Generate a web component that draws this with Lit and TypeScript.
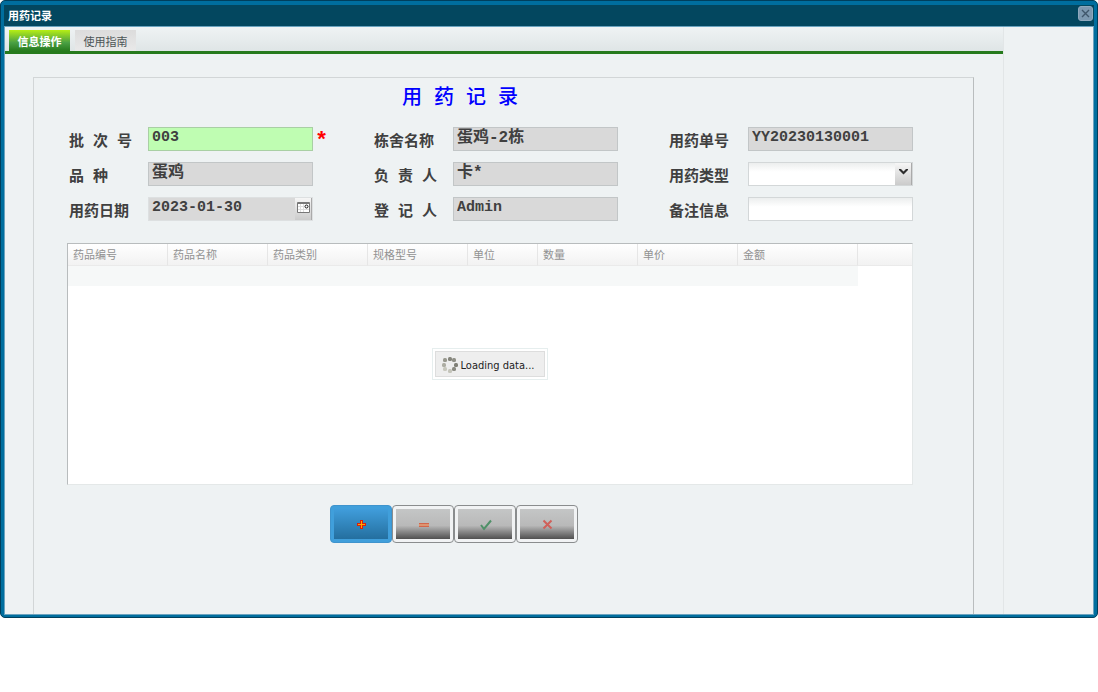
import { LitElement, html, css, svg } from "lit";
import { customElement, state } from "lit/decorators.js";

interface Field {
  id: string;
  label: string;
  value: string;
  kind?: "required" | "date" | "select" | "open";
}

const FIELDS: Field[] = [
  { id: "batch", label: "批 次 号", value: "003", kind: "required" },
  { id: "house", label: "栋舍名称", value: "蛋鸡-2栋" },
  { id: "order", label: "用药单号", value: "YY20230130001" },
  { id: "breed", label: "品 种", value: "蛋鸡" },
  { id: "owner", label: "负 责 人", value: "卡*" },
  { id: "type", label: "用药类型", value: "", kind: "select" },
  { id: "date", label: "用药日期", value: "2023-01-30", kind: "date" },
  { id: "clerk", label: "登 记 人", value: "Admin" },
  { id: "note", label: "备注信息", value: "", kind: "open" },
];

const COLUMNS = ["药品编号", "药品名称", "药品类别", "规格型号", "单位", "数量", "单价", "金额"];

const ACTIONS = [
  {
    name: "新增",
    icon: svg`<path d="M6 3h3v3h3v3H9v3H6V9H3V6h3z" fill="#d8200c"/><path d="M7 4h1v3h3v1H8v3H7V8H4V7h3z" fill="#ffa800"/>`,
  },
  {
    name: "删除",
    icon: svg`<path d="M3 6h10v4H3z" fill="#d2664c"/><path d="M3 7h10v2H3z" fill="#dd9470"/>`,
  },
  {
    name: "保存",
    icon: svg`<path d="M3 8l3 4L13 3.500" fill="none" stroke="#4f9168" stroke-width="2"/>`,
  },
  {
    name: "取消",
    icon: svg`<path d="M3.500 3.500l8 8M11.500 3.500l-8 8" fill="none" stroke="#d0605a" stroke-width="2"/>`,
  },
];

@customElement("app-root")
export class AppRoot extends LitElement {
  @state() private tab = 0;

  static styles = css`
    :host {
      display: block;
      font: 11px/16px "Noto Sans", "Noto Sans CJK SC", sans-serif;
      color: #222;
    }
    * {
      box-sizing: border-box;
    }
    button,
    input,
    select {
      font: inherit;
      color: inherit;
      margin: 0;
      padding: 0;
      border-radius: 0;
      outline: none;
    }
    .window {
      display: flex;
      flex-direction: column;
      min-height: 618px;
      background: #006e9e;
      border: 1px solid #003f5c;
      border-radius: 5px;
      padding: 4px 3px 2px 3px;
    }
    .titlebar {
      display: flex;
      align-items: center;
      justify-content: space-between;
      height: 21px;
      padding: 0 1px 0 4px;
      background: #03475f;
      color: #fff;
    }
    .titlebar h1 {
      margin: 0;
      font: bold 11px/18px "Noto Sans CJK SC", sans-serif;
      padding-bottom: 2px;
    }
    .close {
      display: grid;
      place-items: center;
      width: 15px;
      height: 15px;
      margin-bottom: 4px;
      border: 1px solid #8fa9bd;
      border-radius: 3px;
      background: #7c98b0;
    }
    .body {
      flex: 1;
      display: flex;
      background: #eef2f3;
      border: 1px solid #6aa3bf;
    }
    .panel {
      flex: 1;
      display: flex;
      flex-direction: column;
      margin-right: 90px;
      border-right: 1px solid #e2e6e7;
    }
    .tabs {
      display: flex;
      gap: 5px;
      height: 27px;
      padding: 3px 4px 0;
      background: linear-gradient(#eff3f4, #dfe5e6);
      border-bottom: 3px solid #267a1c;
    }
    .tab {
      border: 0;
      width: 61px;
      height: 21px;
      background: linear-gradient(#dcdcdc, #e9e9e9);
      color: #4d5556;
      font: 11px/20px "Noto Sans CJK SC", sans-serif;
    }
    .tab.on {
      background: linear-gradient(#b6ee14, #4aa044 60%, #267a1c);
      color: #fff;
      font-weight: bold;
    }
    .sheet {
      flex: 1;
      margin: 23px 29px 0 28px;
      padding: 6px 60px 20px 33px;
      border: 1px solid #d2d6d7;
      border-right-color: #b9bdbe;
      border-bottom: 0;
    }
    h2 {
      margin: 0;
      padding-right: 60px;
      text-align: center;
      color: #00f;
      font: 500 20px/30px "Liberation Mono", "Noto Sans CJK SC", sans-serif;
    }
    .form {
      display: grid;
      grid-template-columns: 305px 295px 244px;
      row-gap: 11px;
      padding: 13px 0 0 2px;
      color: #404040;
      font: bold 15px/24px "Liberation Mono", "Noto Sans CJK SC", monospace;
    }
    .field {
      display: flex;
      height: 24px;
    }
    .field label {
      width: 79px;
      padding-top: 4px;
      line-height: 24px;
      white-space: pre;
    }
    .box {
      display: flex;
      width: 165px;
      height: 24px;
      background: #d9d9d9;
      border: 1px solid #c2c6c7;
    }
    .box input,
    .box select {
      flex: 1;
      min-width: 0;
      border: 0;
      background: none;
      padding: 0 3px 2px;
    }
    .box .han {
      font-size: 16px;
    }
    .box.required {
      background: #bffdb2;
      border-color: #a9cfa4;
    }
    .box.open,
    .box.select {
      background: linear-gradient(#eceeee, #fff 40%);
      border-color: #d3d7d8;
    }
    .box.date {
      border-color: #dde0e1;
    }
    .box.select {
      display: grid;
      grid-template: 22px / 1fr 17px;
    }
    .box select {
      grid-area: 1 / 1 / 2 / 3;
      appearance: none;
    }
    .trigger {
      display: grid;
      justify-items: center;
      align-items: start;
      width: 17px;
      border: 0;
      border-right: 1px solid #aaa;
      padding-top: 3px;
      background: linear-gradient(#f6f6f6, #cbcbcb);
    }
    .select .trigger {
      grid-area: 1 / 2;
      pointer-events: none;
    }
    .star {
      padding-left: 2px;
      color: #f00;
      font: bold 22px/30px "Liberation Mono", monospace;
    }
    .grid {
      display: flex;
      flex-direction: column;
      position: relative;
      min-height: 242px;
      margin-top: 22px;
      background: #fff;
      border: 1px solid #e4e8e8;
      border-top-color: #b8bcbd;
      border-left-color: #b8bcbd;
    }
    table {
      width: 100%;
      table-layout: fixed;
      border-collapse: separate;
      border-spacing: 0;
    }
    th {
      height: 22px;
      padding: 0 5px 1px;
      text-align: left;
      font: 11px/20px "Noto Sans CJK SC", sans-serif;
      color: #929292;
      background: linear-gradient(#fff, #f2f2f2);
      border-bottom: 1px solid #eaeaea;
      border-right: 1px solid #e6e6e6;
    }
    th:last-child {
      border-right: 0;
    }
    td {
      height: 20px;
      padding: 0;
      background: #f6f8f8;
    }
    td:last-child {
      background: #fff;
    }
    .w70 {
      width: 70px;
    }
    .w100 {
      width: 100px;
    }
    .w120 {
      width: 120px;
    }
    .mask {
      position: absolute;
      inset: 0;
      display: grid;
      place-items: center;
    }
    .loading {
      display: flex;
      align-items: center;
      gap: 3px;
      height: 26px;
      padding: 0 10px 0 5px;
      background: #eee;
      border: 1px solid #ddd;
      outline: 2px solid #fff;
      box-shadow: 0 0 0 3px #e6eeee;
      font: 11px/16px "DejaVu Sans Condensed", "Noto Sans", sans-serif;
    }
    .loading span {
      padding-top: 3px;
    }
    .actions {
      display: flex;
      justify-content: center;
      padding: 20px 72px 0 0;
    }
    .action {
      display: grid;
      place-items: stretch;
      width: 62px;
      height: 38px;
      padding: 3px;
      border: 1px solid #8a8d8e;
      border-radius: 4px;
      background: #f1f3f4;
    }
    .action span {
      display: grid;
      place-items: center;
      background: linear-gradient(#c4c6c6, #b9b9b9 55%, #505050);
    }
    .action:first-child {
      border-color: #3f94cd;
      background: #409fdb;
    }
    .action:first-child span {
      background: linear-gradient(#409ddb, #246f9f);
    }
    svg {
      display: block;
    }
  `;

  private control(f: Field) {
    const han = /[\u4e00-\u9fff]/.test(f.value) ? "han" : "";
    if (f.kind === "select") {
      return html`<div class="box select">
        <span class="trigger">
          <svg width="11" height="11" viewBox="0 0 11 11">
            <path d="M1 3h2l2.500 2.500L8 3h2v1L5.500 8.500 1 4z" fill="#2d2d2d" />
          </svg>
        </span>
        <select id=${f.id}><option></option></select>
      </div>`;
    }
    return html`<div class="box ${f.kind ?? ""}">
        <input id=${f.id} class=${han} .value=${f.value} ?readonly=${!f.kind || f.kind === "date"} />
        ${f.kind === "date"
          ? html`<button class="trigger" aria-label="选择日期">
              <svg width="13" height="13" viewBox="0 0 13 13">
                <path d="M.5 1.500h12v10H.5z" fill="#fff" stroke="#777" />
                <path d="M1 2h11" stroke="#777" stroke-width="2" />
                <path d="M3.500 3v8M6.500 3v8M1 5.500h6M1 8.500h11" stroke="#ddd" />
                <circle cx="9.500" cy="5.500" r="1.500" fill="#fff" stroke="#111" />
              </svg>
            </button>`
          : ""}
      </div>
      ${f.kind === "required" ? html`<span class="star">*</span>` : ""}`;
  }

  private spinner() {
    const shades = ["#85857c", "#8f8f86", "#7f7f76", "#8b8b82", "#c4c4ba", "#c8c8be", "#adada3", "#98988e"];
    return svg`<svg width="17" height="17" viewBox="0 0 17 17">${shades.map((c, i) => {
      const a = (i * Math.PI) / 4 - Math.PI / 2;
      return svg`<rect x=${Math.round(6.5 + 6 * Math.cos(a))} y=${Math.round(6.5 + 6 * Math.sin(a))} width="4" height="4" rx="1.500" fill=${c} />`;
    })}</svg>`;
  }

  render() {
    return html`<section class="window">
      <header class="titlebar">
        <h1>用药记录</h1>
        <button class="close" aria-label="关闭">
          <svg width="9" height="9" viewBox="0 0 9 9">
            <path d="M1 1l7 7M8 1L1 8" stroke="#3f566b" stroke-width="1.400" />
          </svg>
        </button>
      </header>
      <div class="body">
        <div class="panel">
          <nav class="tabs">
            ${["信息操作", "使用指南"].map(
              (t, i) => html`<button class="tab ${this.tab === i ? "on" : ""}" @click=${() => (this.tab = i)}>${t}</button>`
            )}
          </nav>
          <main class="sheet">
            <h2>用 药 记 录</h2>
            <div class="form">
              ${FIELDS.map((f) => html`<div class="field"><label for=${f.id}>${f.label}</label>${this.control(f)}</div>`)}
            </div>
            <div class="grid">
              <table>
                <colgroup>
                  <col class="w100" /><col class="w100" /><col class="w100" /><col class="w100" />
                  <col class="w70" /><col class="w100" /><col class="w100" /><col class="w120" /><col />
                </colgroup>
                <thead>
                  <tr>${COLUMNS.map((c) => html`<th>${c}</th>`)}<th></th></tr>
                </thead>
                <tbody>
                  <tr><td colspan="8"></td><td></td></tr>
                </tbody>
              </table>
              <div class="mask"><div class="loading">${this.spinner()}<span>Loading data...</span></div></div>
            </div>
            <div class="actions">
              ${ACTIONS.map(
                (a) => html`<button class="action" aria-label=${a.name}>
                  <span><svg width="15" height="15" viewBox="0 0 15 15">${a.icon}</svg></span>
                </button>`
              )}
            </div>
          </main>
        </div>
      </div>
    </section>`;
  }
}
